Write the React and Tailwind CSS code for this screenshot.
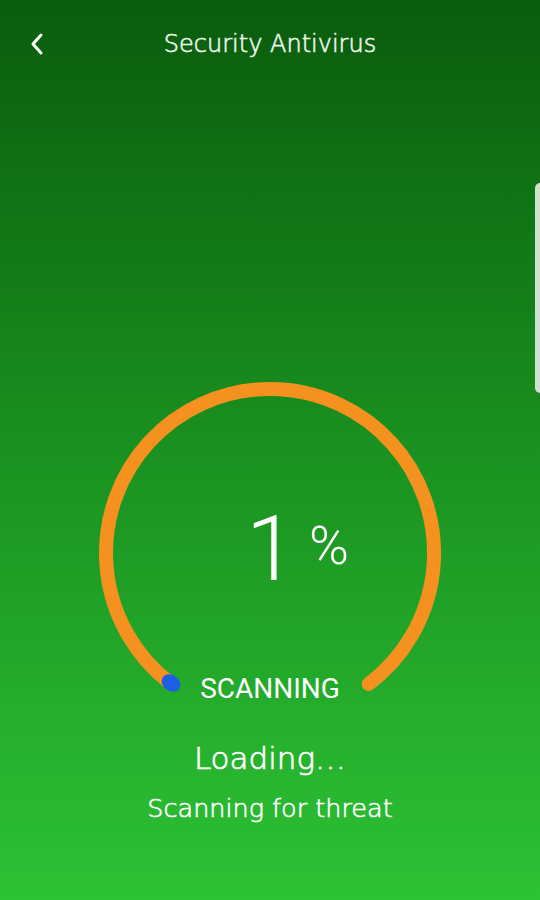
import React from "react";

const ScanRing = () => (
  <svg width="344" height="344" viewBox="0 0 344 344" className="absolute inset-0">
    <path
      d="M 72.2 302.1 A 164 164 0 1 1 270.7 303"
      fill="none"
      stroke="#f5921f"
      strokeWidth="14"
      strokeLinecap="round"
    />
    <ellipse cx="73" cy="302" rx="10" ry="8" fill="#1f5fe6" transform="rotate(35 73 302)" />
  </svg>
);

const App = () => {
  return (
    <div className="relative w-[540px] h-[900px] overflow-hidden bg-gradient-to-b from-[#0a5c0d] via-[#1a9120] to-[#2dc235] text-white font-['DejaVu_Sans',sans-serif]">
      {/* Header */}
      <div className="flex items-center h-[88px] px-7">
        <svg width="18" height="24" viewBox="0 0 18 24" className="shrink-0">
          <path d="M13 3 L5 12 L13 21" fill="none" stroke="white" strokeWidth="3" strokeLinecap="round" strokeLinejoin="round" />
        </svg>
        <h1 className="flex-1 text-center text-[24px] font-extralight text-[#eef6ee] [-webkit-text-stroke:0.6px_#eef6ee] pr-[18px]">Security Antivirus</h1>
      </div>

      {/* scrollbar */}
      <div className="absolute right-0 top-[183px] w-[5px] h-[210px] rounded-l-full bg-[#cde3cd]" />

      {/* Scan ring */}
      <div className="relative w-[344px] h-[344px] mx-auto mt-[293px]">
        <ScanRing />
        <div className="absolute inset-0 flex flex-col items-center font-['Roboto',sans-serif]">
          <div className="flex items-start mt-[124px] ml-[55px]">
            <span className="text-[90px] font-light leading-none">1</span>
            <span className="text-[54px] font-light leading-none ml-[13px] mt-[14px]">%</span>
          </div>
          <div className="mt-auto mb-[22px] text-[28px] leading-none">SCANNING</div>
        </div>
      </div>

      {/* Status */}
      <div className="flex flex-col items-center mt-[18px]">
        <div className="text-[31px] font-extralight leading-none [-webkit-text-stroke:0.7px_white]">Loading…</div>
        <div className="text-[25.5px] font-extralight leading-none mt-[22px] [-webkit-text-stroke:0.6px_white]">Scanning for threat</div>
      </div>
    </div>
  );
};

export default App;
